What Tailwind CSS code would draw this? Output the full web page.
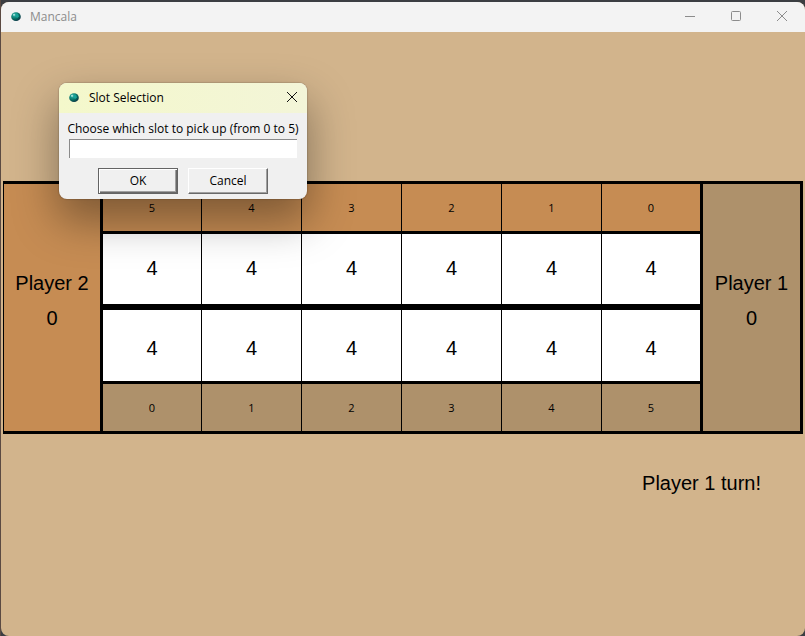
<!DOCTYPE html>
<html lang="en">
<head>
<meta charset="utf-8">
<meta name="viewport" content="width=device-width, initial-scale=1">
<title>Mancala</title>
<script src="https://cdn.jsdelivr.net/npm/@tailwindcss/browser@4"></script>
</head>
<body class="bg-[#3b3e42] font-['Liberation_Sans',Arial,sans-serif] text-black">
<svg class="absolute size-0" aria-hidden="true">
  <defs>
    <radialGradient id="ball" cx="0.35" cy="0.3" r="0.75">
      <stop offset="0" stop-color="#5cc4bb"/>
      <stop offset="0.3" stop-color="#159488"/>
      <stop offset="0.7" stop-color="#076058"/>
      <stop offset="1" stop-color="#0b3044"/>
    </radialGradient>
  </defs>
</svg>
<div class="flex min-h-screen flex-col border-l border-[#5b4a42] pt-0.5">
  <main class="flex grow flex-col overflow-hidden rounded-lg bg-[#d2b48c]">
    <header class="flex h-[30px] items-center bg-[#f3f3f3] pl-[9px] font-['Open_Sans','Noto_Sans',sans-serif] text-xs text-[#8c8c8c]">
      <svg class="mr-2 size-3" viewBox="0 0 12 12" aria-hidden="true"><ellipse cx="6" cy="5.7" rx="4.8" ry="4.4" fill="url(#ball)"/><path d="M6 2.3 8 3.1 9 5.4 7 7 5.4 5.3Z" fill="#17a297"/><circle cx="4" cy="3.7" r="1" fill="#a8e4df"/></svg>
      <h1 class="grow">Mancala</h1>
      <button aria-label="Minimize" class="flex h-full w-[46px] items-center justify-center"><svg class="size-3" viewBox="0 0 12 12" fill="none" stroke="#8c8c8c"><path d="M1 5.5h10"/></svg></button>
      <button aria-label="Maximize" class="flex h-full w-[46px] items-center justify-center"><svg class="size-3" viewBox="0 0 12 12" fill="none" stroke="#8c8c8c"><rect x="1.5" y="0.5" width="9" height="9" rx="1"/></svg></button>
      <button aria-label="Close" class="flex h-full w-[46px] items-center justify-center"><svg class="size-3" viewBox="0 0 12 12" fill="none" stroke="#8c8c8c"><path d="m1 0 10 10M11 0 1 10"/></svg></button>
    </header>

    <div class="px-0.5 pt-[149px]">
      <section aria-label="Board" class="grid grid-cols-[96fr_600fr_100fr] border-y-[3px] border-l border-r-[3px] border-black text-center text-xl/[35px]">
        <div class="bg-[#c68c53] pt-[82px]">
          <h2>Player 2</h2>
          <p>0</p>
        </div>
        <div class="border-l-[3px] border-black">
          <div class="grid h-[50px] grid-cols-[99fr_100fr_100fr_100fr_100fr_98fr] divide-x divide-black border-b-[3px] border-black bg-[#c68c53] font-['Open_Sans','Noto_Sans',sans-serif] text-[11px]/[47px]">
            <div>5</div><div>4</div><div>3</div><div>2</div><div>1</div><div>0</div>
          </div>
          <div class="grid h-[76px] grid-cols-[99fr_100fr_100fr_100fr_100fr_98fr] divide-x divide-black border-b-[6px] border-black bg-white leading-[68px]">
            <div>4</div><div>4</div><div>4</div><div>4</div><div>4</div><div>4</div>
          </div>
          <div class="grid h-[74px] grid-cols-[99fr_100fr_100fr_100fr_100fr_98fr] divide-x divide-black border-b-[3px] border-black bg-white leading-[76px]">
            <div>4</div><div>4</div><div>4</div><div>4</div><div>4</div><div>4</div>
          </div>
          <div class="grid h-[47px] grid-cols-[99fr_100fr_100fr_100fr_100fr_98fr] divide-x divide-black bg-[#ae916b] font-['Open_Sans','Noto_Sans',sans-serif] text-[11px]/[47px]">
            <div>0</div><div>1</div><div>2</div><div>3</div><div>4</div><div>5</div>
          </div>
        </div>
        <div class="border-l-[3px] border-black bg-[#ae916b] pt-[82px]">
          <h2>Player 1</h2>
          <p>0</p>
        </div>
      </section>
      <p class="mt-8 pr-[42px] text-right text-xl/[35px]">Player 1 turn!</p>
    </div>
  </main>
</div>

<form role="dialog" aria-labelledby="dialog-title" class="absolute top-[83px] left-[59px] w-[248px] overflow-hidden rounded-lg bg-[#f0f0f0] pb-[5px] font-['Open_Sans','Noto_Sans',sans-serif] text-xs shadow-[0_20px_44px_2px_rgba(0,0,0,0.36),0_0_1px_1px_rgba(0,0,0,0.12)]">
  <div class="flex h-[30px] items-center bg-linear-to-r from-[#f4f8cb] to-[#f3f5d8] pr-2 pl-[9px]">
    <svg class="mr-[9px] size-3" viewBox="0 0 12 12" aria-hidden="true"><ellipse cx="6" cy="5.7" rx="4.8" ry="4.4" fill="url(#ball)"/><path d="M6 2.3 8 3.1 9 5.4 7 7 5.4 5.3Z" fill="#17a297"/><circle cx="4" cy="3.7" r="1" fill="#a8e4df"/></svg>
    <h2 id="dialog-title" class="grow">Slot Selection</h2>
    <button type="button" aria-label="Close" class="p-px"><svg class="size-3" viewBox="0 0 12 12" fill="none" stroke="#111"><path d="m1 0 10 10M11 0 1 10"/></svg></button>
  </div>
  <div class="px-2.5 pt-1.5">
    <label for="slot" class="-mx-2.5 block text-center leading-5 whitespace-nowrap">Choose which slot to pick up (from 0 to 5)</label>
    <input id="slot" type="text" class="block h-[19px] w-full border-t border-l border-[#8a8a8a] bg-white px-1 outline-none">
    <div class="mt-2.5 flex justify-center gap-2.5">
      <button type="submit" class="h-[26px] w-20 border border-[#646464] shadow-[inset_1px_1px_0_#ffffff,inset_-1px_-1px_0_#696969,inset_-2px_-2px_0_#a0a0a0]">OK</button>
      <button type="button" class="h-[26px] w-20 border border-t-white border-r-[#696969] border-b-[#696969] border-l-white shadow-[inset_-1px_-1px_0_#a0a0a0]">Cancel</button>
    </div>
  </div>
</form>
</body>
</html>
